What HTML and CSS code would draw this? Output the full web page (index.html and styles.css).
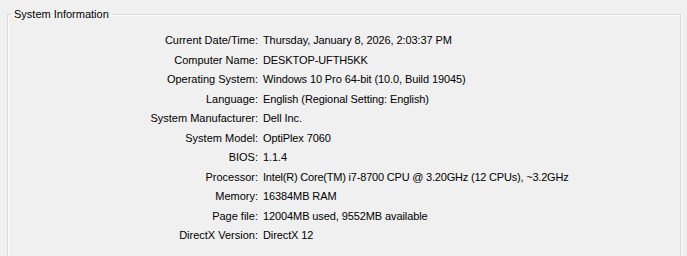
FILE: index.html
```html
<!DOCTYPE html>
<html>
<head>
<meta charset="utf-8">
<link rel="stylesheet" href="styles.css">
</head>
<body>
<fieldset class="group">
  <legend class="group-title">System Information</legend>
  <dl class="info">
    <dt>Current Date/Time:</dt><dd>Thursday, January 8, 2026, 2:03:37 PM</dd>
    <dt>Computer Name:</dt><dd>DESKTOP-UFTH5KK</dd>
    <dt>Operating System:</dt><dd>Windows 10 Pro 64-bit (10.0, Build 19045)</dd>
    <dt>Language:</dt><dd>English (Regional Setting: English)</dd>
    <dt>System Manufacturer:</dt><dd>Dell Inc.</dd>
    <dt>System Model:</dt><dd>OptiPlex 7060</dd>
    <dt>BIOS:</dt><dd>1.1.4</dd>
    <dt>Processor:</dt><dd class="tight">Intel(R) Core(TM) i7-8700 CPU @ 3.20GHz (12 CPUs), ~3.2GHz</dd>
    <dt>Memory:</dt><dd>16384MB RAM</dd>
    <dt>Page file:</dt><dd>12004MB used, 9552MB available</dd>
    <dt>DirectX Version:</dt><dd>DirectX 12</dd>
  </dl>
</fieldset>
</body>
</html>
```
FILE: styles.css
```css
html, body {
  margin: 0;
  padding: 0;
  background: #f0f0f0;
  height: 100%;
  overflow: hidden;
}
body {
  font-family: "Liberation Sans", Arial, sans-serif;
  font-size: 11px;
  color: #000;
}
.group {
  box-sizing: border-box;
  margin: 8px 6px 0 7px;
  padding: 0;
  border: 1px solid #d9d9d9;
  border-bottom: none;
  box-shadow: 1px 0 0 #fbfbfb, inset 1px 1px 0 #fbfbfb;
  height: 248px;
}
.group-title {
  margin-left: 3px;
  padding: 0 3px;
  line-height: 13px;
}
.info {
  display: grid;
  grid-template-columns: 250px 1fr;
  column-gap: 5px;
  margin: 10px 0 0 0;
  line-height: 19.5px;
}
.info dt {
  text-align: right;
  white-space: nowrap;
}
.info dd {
  margin: 0;
  white-space: nowrap;
  letter-spacing: -0.1px;
}
.info dd.tight {
  letter-spacing: -0.2px;
}
```
